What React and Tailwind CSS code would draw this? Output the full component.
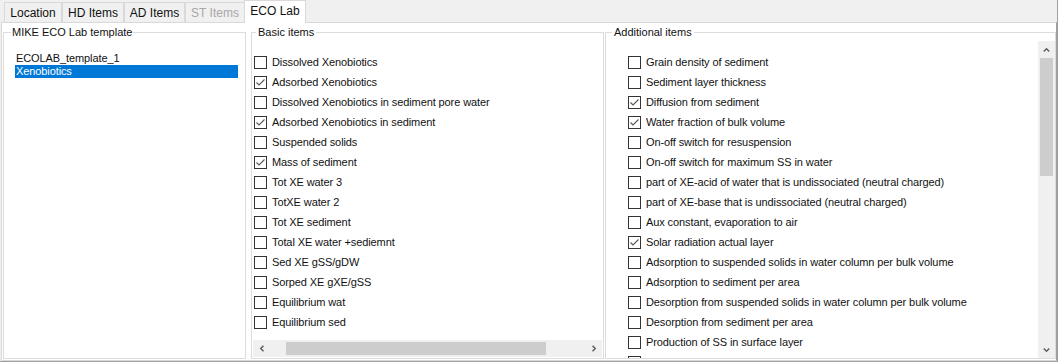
import React from "react";

const basicItems = [
  ["Dissolved Xenobiotics", false],
  ["Adsorbed Xenobiotics", true],
  ["Dissolved Xenobiotics in sediment pore water", false],
  ["Adsorbed Xenobiotics in sediment", true],
  ["Suspended solids", false],
  ["Mass of sediment", true],
  ["Tot XE water 3", false],
  ["TotXE water 2", false],
  ["Tot XE sediment", false],
  ["Total XE water +sediemnt", false],
  ["Sed XE gSS/gDW", false],
  ["Sorped XE gXE/gSS", false],
  ["Equilibrium wat", false],
  ["Equilibrium sed", false],
];

const additionalItems = [
  ["Grain density of sediment", false],
  ["Sediment layer thickness", false],
  ["Diffusion from sediment", true],
  ["Water fraction of bulk volume", true],
  ["On-off switch for resuspension", false],
  ["On-off switch for maximum SS in water", false],
  ["part of XE-acid of water that is undissociated (neutral charged)", false],
  ["part of XE-base that is undissociated (neutral charged)", false],
  ["Aux constant, evaporation to air", false],
  ["Solar radiation actual layer", true],
  ["Adsorption to suspended solids in water column per bulk volume", false],
  ["Adsorption to sediment per area", false],
  ["Desorption from suspended solids in water column per bulk volume", false],
  ["Desorption from sediment per area", false],
  ["Production of SS in surface layer", false],
  ["Sedimentation of adsorbed XE", false],
];

function CheckBox({ checked }) {
  return (
    <div className="w-[13px] h-[13px] shrink-0 border border-[#333333] bg-white flex items-center justify-center">
      {checked && (
        <svg width="11" height="11" viewBox="0 0 11 11">
          <polyline points="1.5,5.5 4,8 9.5,2.5" fill="none" stroke="#555555" strokeWidth="1.1" />
        </svg>
      )}
    </div>
  );
}

function Row({ label, checked }) {
  return (
    <div className="flex items-center h-[20px] gap-[5px] whitespace-nowrap">
      <CheckBox checked={checked} />
      <span className="text-[11px] tracking-[-0.1px] text-[#111111]">{label}</span>
    </div>
  );
}

function Chevron({ dir }) {
  const pts = {
    up: "0.75,4.5 3.5,1.75 6.25,4.5",
    down: "0.75,1.5 3.5,4.25 6.25,1.5",
    left: "4.5,0.75 1.75,3.5 4.5,6.25",
    right: "1.5,0.75 4.25,3.5 1.5,6.25",
  }[dir];
  const w = dir === "up" || dir === "down" ? 7 : 6;
  const h = dir === "up" || dir === "down" ? 6 : 7;
  return (
    <svg width={w} height={h} viewBox={`0 0 ${w} ${h}`}>
      <polyline points={pts} fill="none" stroke="#606060" strokeWidth="1.5" />
    </svg>
  );
}

function Tab({ label, width, selected, disabled }) {
  if (selected) {
    return (
      <div
        className="h-[23px] -mb-[1px] relative z-10 bg-white border border-b-0 border-[#d9d9d9] flex items-center justify-center text-[12px] text-[#111111] -ml-[1px]"
        style={{ width }}
      >
        <span className="-mt-[2px]">{label}</span>
      </div>
    );
  }
  return (
    <div
      className={`h-[20px] bg-[#f0f0f0] border border-b-0 border-[#d9d9d9] flex items-center justify-center text-[12px] ${
        disabled ? "text-[#a7a7a7]" : "text-[#111111]"
      }`}
      style={{ width }}
    >
      {label}
    </div>
  );
}

export default function App() {
  return (
    <div className="w-[1058px] h-[362px] bg-[#f0f0f0] border-r border-b border-[#a0a0a0] overflow-hidden font-['Liberation_Sans',Arial,sans-serif]">
      {/* tab strip */}
      <div className="h-[22px] flex items-end pl-[4px]">
        <Tab label="Location" width={58} />
        <Tab label="HD Items" width={62} />
        <Tab label="AD Items" width={61} />
        <Tab label="ST Items" width={60} disabled />
        <Tab label="ECO Lab" width={62} selected />
      </div>

      {/* tab page */}
      <div className="ml-[1px] w-[1056px] h-[339px] bg-white border border-[#d9d9d9] border-r-[#a0a0a0] pt-[2px] pl-[1px] flex">
        {/* MIKE ECO Lab template */}
        <fieldset className="w-[243px] h-[334px] border border-[#dcdcdc] flex flex-col">
          <legend className="ml-[7px] px-[1px] text-[11px] leading-[14px] text-[#111111]">MIKE ECO Lab template</legend>
          <div className="pt-[13px] ml-[11px] w-[223px] text-[11px] tracking-[-0.1px]">
            <div className="h-[13px] leading-[13px] pl-[1px] text-[#111111]">ECOLAB_template_1</div>
            <div className="h-[13px] leading-[13px] pl-[1px] bg-[#0078d7] text-white">Xenobiotics</div>
          </div>
        </fieldset>

        {/* Basic items */}
        <fieldset className="ml-[5px] w-[353px] h-[334px] border border-[#dcdcdc] flex flex-col min-h-0">
          <legend className="ml-[4px] px-[2px] text-[11px] leading-[14px] text-[#111111]">Basic items</legend>
          <div className="flex-1 flex flex-col min-h-0 h-[319px]">
            <div className="flex-1 overflow-hidden pt-[13px] pl-[2px]">
              {basicItems.map(([label, checked]) => (
                <Row key={label} label={label} checked={checked} />
              ))}
            </div>
            <div className="mx-[1px] mb-[1px] h-[17px] bg-[#f0f0f0] flex items-stretch">
              <div className="w-[17px] flex items-center justify-center">
                <Chevron dir="left" />
              </div>
              <div className="w-[16px]" />
              <div className="w-[260px] bg-[#cdcdcd] my-[2px]" />
              <div className="flex-1" />
              <div className="w-[17px] flex items-center justify-center">
                <Chevron dir="right" />
              </div>
            </div>
          </div>
        </fieldset>

        {/* Additional items */}
        <fieldset className="ml-[1px] w-[451px] h-[334px] border border-[#dcdcdc] flex flex-col min-h-0">
          <legend className="ml-[6px] px-[2px] text-[11px] leading-[14px] text-[#111111]">Additional items</legend>
          <div className="flex h-[319px] pt-[2px]">
            <div className="flex-1 overflow-hidden pt-[11px] pl-[22px] pb-[1px]">
              {additionalItems.map(([label, checked]) => (
                <Row key={label} label={label} checked={checked} />
              ))}
            </div>
            <div className="w-[17px] bg-[#f0f0f0] flex flex-col">
              <div className="h-[17px] flex items-center justify-center">
                <Chevron dir="up" />
              </div>
              <div className="h-[118px] bg-[#cdcdcd] mx-[2px]" />
              <div className="flex-1" />
              <div className="h-[17px] flex items-center justify-center">
                <Chevron dir="down" />
              </div>
            </div>
          </div>
        </fieldset>
      </div>
    </div>
  );
}
